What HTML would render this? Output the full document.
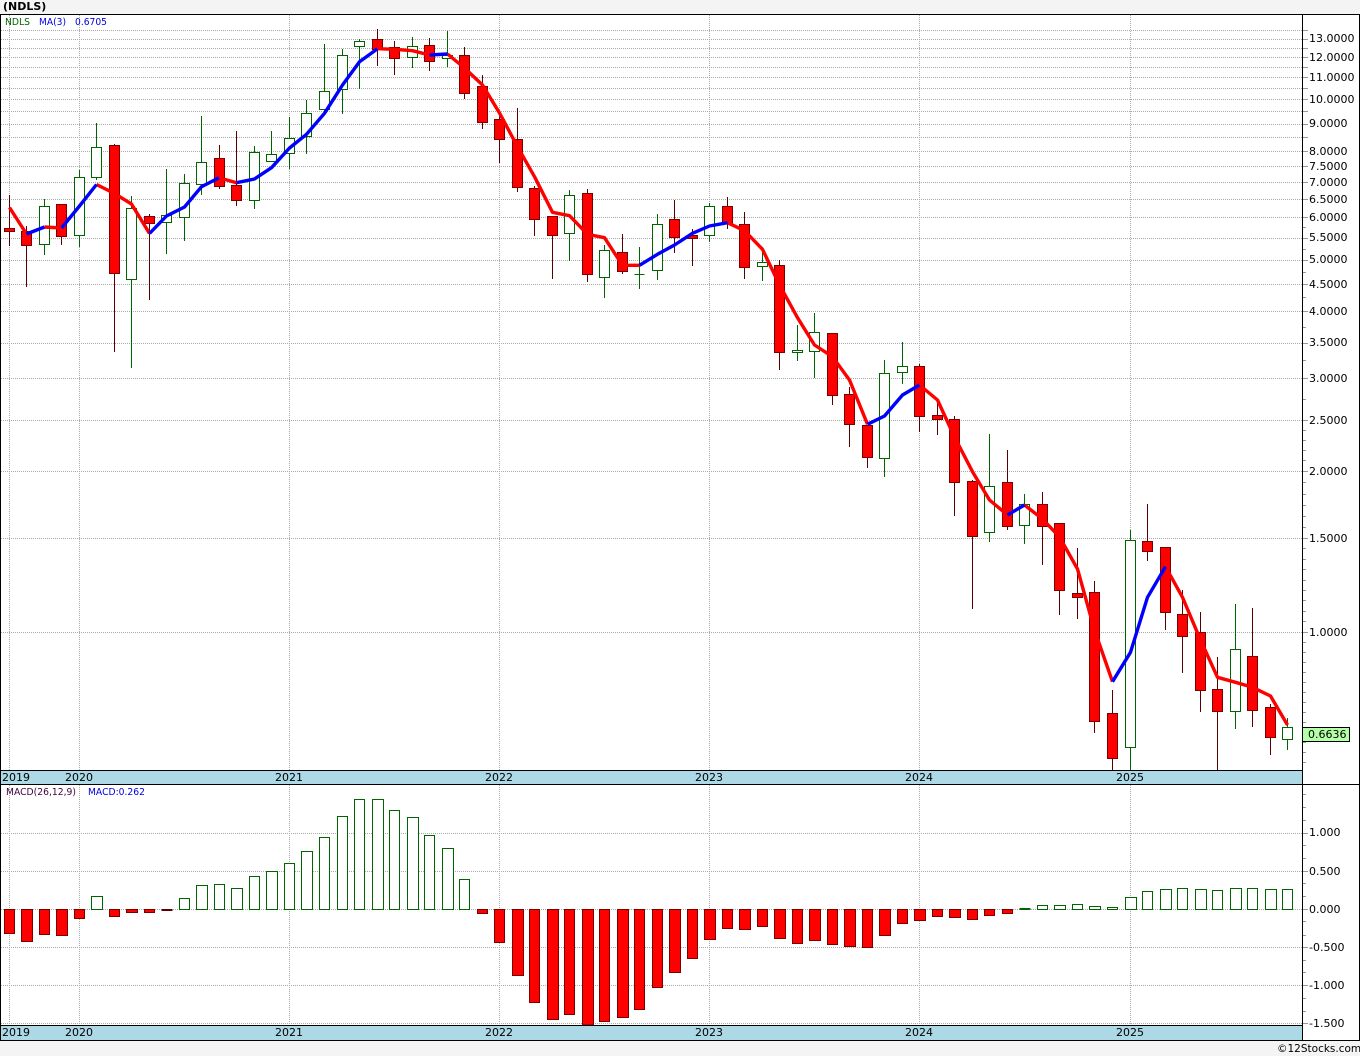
<!DOCTYPE html>
<html><head><meta charset="utf-8"><title>(NDLS)</title>
<style>
html,body{margin:0;padding:0;background:#f4f4f4;width:1360px;height:1056px;overflow:hidden}
svg{display:block}
text{font-family:"DejaVu Sans","Liberation Sans",sans-serif;font-size:11px;fill:#000}
</style></head><body>
<svg width="1360" height="1056" viewBox="0 0 1360 1056" xmlns="http://www.w3.org/2000/svg">
<rect width="1360" height="1056" fill="#f4f4f4"/>
<rect x="0" y="14" width="1360" height="1027" fill="#fff"/>
<g shape-rendering="crispEdges">
<!-- grid -->
<path fill="none" stroke="#aaa" stroke-dasharray="1 1" d="M1 30.5H1302M1 39.5H1302M1 48.5H1302M1 57.5H1302M1 67.5H1302M1 77.5H1302M1 88.5H1302M1 99.5H1302M1 111.5H1302M1 124.5H1302M1 137.5H1302M1 151.5H1302M1 166.5H1302M1 182.5H1302M1 199.5H1302M1 217.5H1302M1 238.5H1302M1 260.5H1302M1 284.5H1302M1 311.5H1302M1 343.5H1302M1 378.5H1302M1 420.5H1302M1 471.5H1302M1 538.5H1302M1 632.5H1302M1 833.5H1302M1 871.5H1302M1 909.5H1302M1 947.5H1302M1 985.5H1302M1 1023.5H1302"/>
<path fill="none" stroke="#aaa" stroke-dasharray="1 1" d="M9.5 15V770M79.5 15V770M289.5 15V770M499.5 15V770M709.5 15V770M919.5 15V770M1130.5 15V770M9.5 785V1025M79.5 785V1025M289.5 785V1025M499.5 785V1025M709.5 785V1025M919.5 785V1025M1130.5 785V1025"/>
<!-- axis ticks -->
<path fill="none" stroke="#999" d="M1303 30.5h5M1303 39.5h5M1303 48.5h5M1303 57.5h5M1303 67.5h5M1303 77.5h5M1303 88.5h5M1303 99.5h5M1303 111.5h5M1303 124.5h5M1303 137.5h5M1303 151.5h5M1303 166.5h5M1303 182.5h5M1303 199.5h5M1303 217.5h5M1303 238.5h5M1303 260.5h5M1303 284.5h5M1303 311.5h5M1303 343.5h5M1303 378.5h5M1303 420.5h5M1303 471.5h5M1303 538.5h5M1303 632.5h5M1303 833.5h5M1303 871.5h5M1303 909.5h5M1303 947.5h5M1303 985.5h5M1303 1023.5h5"/>
<path fill="none" stroke="#999" d="M1303 227.5h3M1303 249.5h3M1303 272.5h3M1303 297.5h3M1303 327.5h3M1303 360.5h3M1303 399.5h3M1303 430.5h3M1303 440.5h3M1303 450.5h3M1303 460.5h3M1303 482.5h3M1303 494.5h3M1303 505.5h3M1303 516.5h3M1303 527.5h3M1303 548.5h3M1303 559.5h3M1303 569.5h3M1303 580.5h3M1303 590.5h3M1303 600.5h3M1303 611.5h3M1303 621.5h3M1303 642.5h3M1303 652.5h3M1303 662.5h3M1303 672.5h3M1303 682.5h3M1303 692.5h3M1303 702.5h3M1303 712.5h3M1303 722.5h3M1303 732.5h3M1303 742.5h3M1303 752.5h3M1303 762.5h3M1303 794.5h3M1303 807.5h3M1303 820.5h3M1303 845.5h3M1303 858.5h3M1303 883.5h3M1303 896.5h3M1303 921.5h3M1303 935.5h3M1303 960.5h3M1303 972.5h3M1303 998.5h3M1303 1011.5h3"/>
<!-- wicks -->
<path fill="none" stroke="#5a0000" d="M9.5 195V246M26.5 226V287M61.5 204V245M114.5 144V352M149.5 214V300M219.5 145V189M236.5 131V206M377.5 29V66M394.5 41V75M429.5 38V71M464.5 47V99M482.5 75V129M499.5 112V163M517.5 108V192M534.5 186V236M552.5 216V279M587.5 189V282M622.5 234V274M674.5 200V253M692.5 229V266M727.5 197V229M744.5 212V279M779.5 260V370M832.5 333V405M849.5 387V447M867.5 425V468M919.5 364V432M937.5 403V435M954.5 416V516M972.5 480V609M1007.5 450V530M1042.5 492V565M1059.5 523V615M1077.5 548V619M1094.5 581V733M1112.5 690V770M1147.5 504V561M1165.5 547V630M1182.5 590V673M1200.5 612V712M1217.5 657V770M1252.5 608V727M1270.5 704V755"/>
<path fill="none" stroke="#006400" d="M44.5 199V255M79.5 170V247M96.5 123V180M131.5 196V368M166.5 169V254M184.5 174V241M201.5 116V195M254.5 146V209M271.5 131V162M289.5 117V169M306.5 100V154M324.5 44V114M342.5 49V114M359.5 39V89M412.5 37V68M447.5 31V67M569.5 190V261M604.5 245V298M639.5 247V289M657.5 214V280M709.5 203V242M762.5 247V281M797.5 325V361M814.5 313V378M884.5 360V477M902.5 342V384M989.5 434V542M1024.5 494V544M1130.5 530V770M1235.5 604V729M1287.5 718V750"/>
<!-- red bodies -->
<path fill="#f00" stroke="#7a0000" d="M4.5 228.5h10v3h-10zM21.5 231.5h10v14h-10zM56.5 204.5h10v32h-10zM109.5 145.5h10v128h-10zM144.5 216.5h10v7h-10zM214.5 158.5h10v28h-10zM231.5 185.5h10v15h-10zM372.5 39.5h10v10h-10zM389.5 47.5h10v11h-10zM424.5 45.5h10v16h-10zM459.5 55.5h10v38h-10zM477.5 86.5h10v36h-10zM494.5 119.5h10v20h-10zM512.5 139.5h10v48h-10zM529.5 188.5h10v31h-10zM547.5 216.5h10v19h-10zM582.5 193.5h10v81h-10zM617.5 252.5h10v19h-10zM669.5 219.5h10v18h-10zM687.5 235.5h10v3h-10zM722.5 206.5h10v17h-10zM739.5 224.5h10v43h-10zM774.5 265.5h10v87h-10zM827.5 333.5h10v62h-10zM844.5 394.5h10v30h-10zM862.5 425.5h10v32h-10zM914.5 366.5h10v50h-10zM932.5 415.5h10v4h-10zM949.5 419.5h10v63h-10zM967.5 481.5h10v55h-10zM1002.5 482.5h10v44h-10zM1037.5 504.5h10v22h-10zM1054.5 523.5h10v67h-10zM1072.5 593.5h10v4h-10zM1089.5 592.5h10v129h-10zM1107.5 713.5h10v45h-10zM1142.5 541.5h10v10h-10zM1160.5 547.5h10v65h-10zM1177.5 614.5h10v22h-10zM1195.5 632.5h10v58h-10zM1212.5 689.5h10v22h-10zM1247.5 656.5h10v54h-10zM1265.5 707.5h10v30h-10z"/>
<!-- green bodies -->
<path fill="#fff" stroke="#006400" d="M39.5 206.5h10v38h-10zM74.5 177.5h10v58h-10zM91.5 147.5h10v30h-10zM126.5 208.5h10v71h-10zM161.5 215.5h10v7h-10zM179.5 183.5h10v34h-10zM196.5 162.5h10v22h-10zM249.5 152.5h10v48h-10zM266.5 154.5h10v7h-10zM284.5 138.5h10v15h-10zM301.5 113.5h10v23h-10zM319.5 91.5h10v18h-10zM337.5 55.5h10v34h-10zM354.5 41.5h10v5h-10zM407.5 46.5h10v11h-10zM442.5 55.5h10v3h-10zM564.5 195.5h10v38h-10zM599.5 250.5h10v27h-10zM634.5 274.5h10M652.5 224.5h10v46h-10zM704.5 206.5h10v29h-10zM757.5 262.5h10v4h-10zM792.5 350.5h10v2h-10zM809.5 332.5h10v19h-10zM879.5 373.5h10v85h-10zM897.5 366.5h10v6h-10zM984.5 486.5h10v46h-10zM1019.5 504.5h10v21h-10zM1125.5 540.5h10v207h-10zM1230.5 649.5h10v62h-10zM1282.5 727.5h10v12h-10z"/>
<!-- MACD red -->
<path fill="#f00" stroke="#7a0000" d="M4.5 909.5h10V933.5h-10zM21.5 909.5h11V941.5h-11zM39.5 909.5h10V934.5h-10zM56.5 909.5h11V935.5h-11zM74.5 909.5h10V918.5h-10zM109.5 909.5h10V916.5h-10zM126.5 909.5h11V912.5h-11zM144.5 909.5h10V912.5h-10zM477.5 909.5h10V913.5h-10zM494.5 909.5h10V942.5h-10zM512.5 909.5h11V975.5h-11zM529.5 909.5h10V1002.5h-10zM547.5 909.5h11V1019.5h-11zM564.5 909.5h10V1014.5h-10zM582.5 909.5h11V1025h-11zM599.5 909.5h10V1021.5h-10zM617.5 909.5h11V1017.5h-11zM634.5 909.5h10V1009.5h-10zM652.5 909.5h10V987.5h-10zM669.5 909.5h11V972.5h-11zM687.5 909.5h10V958.5h-10zM704.5 909.5h11V939.5h-11zM722.5 909.5h10V928.5h-10zM739.5 909.5h11V929.5h-11zM757.5 909.5h10V926.5h-10zM774.5 909.5h11V938.5h-11zM792.5 909.5h10V943.5h-10zM809.5 909.5h11V940.5h-11zM827.5 909.5h10V944.5h-10zM844.5 909.5h11V946.5h-11zM862.5 909.5h10V947.5h-10zM879.5 909.5h11V935.5h-11zM897.5 909.5h10V923.5h-10zM914.5 909.5h11V920.5h-11zM932.5 909.5h10V916.5h-10zM949.5 909.5h11V917.5h-11zM967.5 909.5h10V919.5h-10zM984.5 909.5h10V915.5h-10zM1002.5 909.5h10V913.5h-10z"/>
<path fill="none" stroke="#5a0000" d="M161.5 909.5h11M161.5 910.5h11"/>
<!-- MACD green -->
<path fill="#fff" stroke="#006400" d="M91.5 896.5h11V909.5h-11zM179.5 898.5h10V909.5h-10zM196.5 885.5h11V909.5h-11zM214.5 884.5h10V909.5h-10zM231.5 888.5h11V909.5h-11zM249.5 876.5h10V909.5h-10zM266.5 871.5h11V909.5h-11zM284.5 863.5h10V909.5h-10zM301.5 851.5h11V909.5h-11zM319.5 837.5h10V909.5h-10zM337.5 816.5h10V909.5h-10zM354.5 799.5h10V909.5h-10zM372.5 799.5h11V909.5h-11zM389.5 810.5h10V909.5h-10zM407.5 817.5h11V909.5h-11zM424.5 835.5h10V909.5h-10zM442.5 848.5h11V909.5h-11zM459.5 879.5h10V909.5h-10zM1037.5 905.5h10V909.5h-10zM1054.5 905.5h11V909.5h-11zM1072.5 904.5h10V909.5h-10zM1089.5 906.5h11V909.5h-11zM1107.5 907.5h10V909.5h-10zM1125.5 897.5h11V909.5h-11zM1142.5 891.5h10V909.5h-10zM1160.5 889.5h11V909.5h-11zM1177.5 888.5h10V909.5h-10zM1195.5 889.5h11V909.5h-11zM1212.5 890.5h10V909.5h-10zM1230.5 888.5h11V909.5h-11zM1247.5 888.5h10V909.5h-10zM1265.5 889.5h11V909.5h-11zM1282.5 889.5h10V909.5h-10z"/>
<path fill="none" stroke="#006400" d="M1019.5 908.5h11M1019.5 909.5h11"/>
</g>
<!-- moving average -->
<g fill="none" stroke-width="3.4" stroke-linejoin="round" stroke-linecap="butt">
<g stroke="#f00">
<polyline points="9.5,207.5 26.5,234"/>
<polyline points="44.5,227 61.5,228"/>
<polyline points="96.5,184.5 114.5,193.5 131.5,204 149.5,233.5"/>
<polyline points="219,177.7 236.5,182.7"/>
<polyline points="377.5,48.7 394.5,49.3 412.5,50.7 429.5,55"/>
<polyline points="447.5,54 464.5,68 482.5,85 499.5,113 517.5,146.7 534.5,176.7 552.5,212.3 569.5,215.7 587.5,234.3 604.5,237.7 622.5,265.3 639.5,265.3"/>
<polyline points="727.5,222.7 744.5,230.7 762.5,249.3 779.5,285 797.5,317.7 814.5,345 832.5,356.7 849.5,380 867.5,424.3"/>
<polyline points="919.5,385 937.5,400 954.5,437 972.5,471.7 989.5,500 1007.5,515"/>
<polyline points="1024.5,505 1042.5,519 1059.5,537 1077.5,569 1094.5,630 1112.5,681.7"/>
<polyline points="1165.5,566.7 1182.5,597.3 1200.5,640 1217.5,677.3 1235.5,682.3 1252.5,687.3 1270.5,696 1287.5,725"/>
</g>
<g stroke="#00f">
<polyline points="26.5,234 44.5,227"/>
<polyline points="61.5,228 79.5,206 96.5,184.5"/>
<polyline points="149.5,233.5 166.5,216 184.5,207 201.5,186.7 219,177.7"/>
<polyline points="236.5,182.7 254.5,179 271.5,167.7 289.5,148 306.5,134.3 324.5,113.3 342.5,85 359.5,61.7 377.5,48.7"/>
<polyline points="429.5,55 447.5,54"/>
<polyline points="639.5,265.3 657.5,254.3 674.5,245 692.5,233.3 709.5,226 727.5,222.7"/>
<polyline points="867.5,424.3 884.5,416 902.5,395 919.5,385"/>
<polyline points="1007.5,515 1024.5,505"/>
<polyline points="1112.5,681.7 1130.5,652.3 1147.5,597.3 1165.5,566.7"/>
</g>
</g>
<g shape-rendering="crispEdges">
<!-- date bars -->
<rect x="1" y="771" width="1301" height="13" fill="#add8e6"/>
<rect x="1" y="1026" width="1301" height="14" fill="#add8e6"/>
<!-- frame -->
<path fill="none" stroke="#000" d="M0 14.5H1360M0.5 14V1041M1302.5 14V1040M1359.5 14V1041M0 770.5H1302M0 784.5H1360M0 1025.5H1302M0 1040.5H1360"/>
<!-- price box -->
<rect x="1302.5" y="727.5" width="47" height="14" fill="#b4ffa8" stroke="#000"/>
</g>
<!-- text -->
<text x="3" y="10" style="font-weight:bold">(NDLS)</text>
<text x="5" y="25" textLength="25" lengthAdjust="spacingAndGlyphs" style="font-size:10px;fill:#006400">NDLS</text>
<text x="39" y="25" textLength="27" lengthAdjust="spacingAndGlyphs" style="font-size:10px;fill:#0000e0">MA(3)</text>
<text x="75" y="25" textLength="32" lengthAdjust="spacingAndGlyphs" style="font-size:10px;fill:#0000e0">0.6705</text>
<text x="6" y="795" textLength="70" lengthAdjust="spacingAndGlyphs" style="font-size:10px;fill:#400040">MACD(26,12,9)</text>
<text x="88" y="795" textLength="57" lengthAdjust="spacingAndGlyphs" style="font-size:10px;fill:#0000e0">MACD:0.262</text>
<g>
<text x="1309" y="42">13.0000</text><text x="1309" y="61">12.0000</text><text x="1309" y="81">11.0000</text><text x="1309" y="103">10.0000</text>
<text x="1309" y="127">9.0000</text><text x="1309" y="155">8.0000</text><text x="1309" y="170">7.5000</text><text x="1309" y="186">7.0000</text>
<text x="1309" y="203">6.5000</text><text x="1309" y="221">6.0000</text><text x="1309" y="241">5.5000</text><text x="1309" y="263">5.0000</text>
<text x="1309" y="288">4.5000</text><text x="1309" y="315">4.0000</text><text x="1309" y="346">3.5000</text><text x="1309" y="382">3.0000</text>
<text x="1309" y="424">2.5000</text><text x="1309" y="475">2.0000</text><text x="1309" y="542">1.5000</text><text x="1309" y="636">1.0000</text>
<text x="1308" y="738">0.6636</text>
<text x="1309" y="836">1.000</text><text x="1309" y="875">0.500</text><text x="1309" y="913">0.000</text>
<text x="1309" y="951">-0.500</text><text x="1309" y="989">-1.000</text><text x="1309" y="1027">-1.500</text>
<text x="2" y="781">2019</text><text x="65" y="781">2020</text><text x="275" y="781">2021</text><text x="485" y="781">2022</text><text x="695" y="781">2023</text><text x="905" y="781">2024</text><text x="1116" y="781">2025</text>
<text x="2" y="1036">2019</text><text x="65" y="1036">2020</text><text x="275" y="1036">2021</text><text x="485" y="1036">2022</text><text x="695" y="1036">2023</text><text x="905" y="1036">2024</text><text x="1116" y="1036">2025</text>
<text x="1277" y="1052" style="font-size:10.5px">©12Stocks.com</text>
</g>
</svg>
</body></html>
